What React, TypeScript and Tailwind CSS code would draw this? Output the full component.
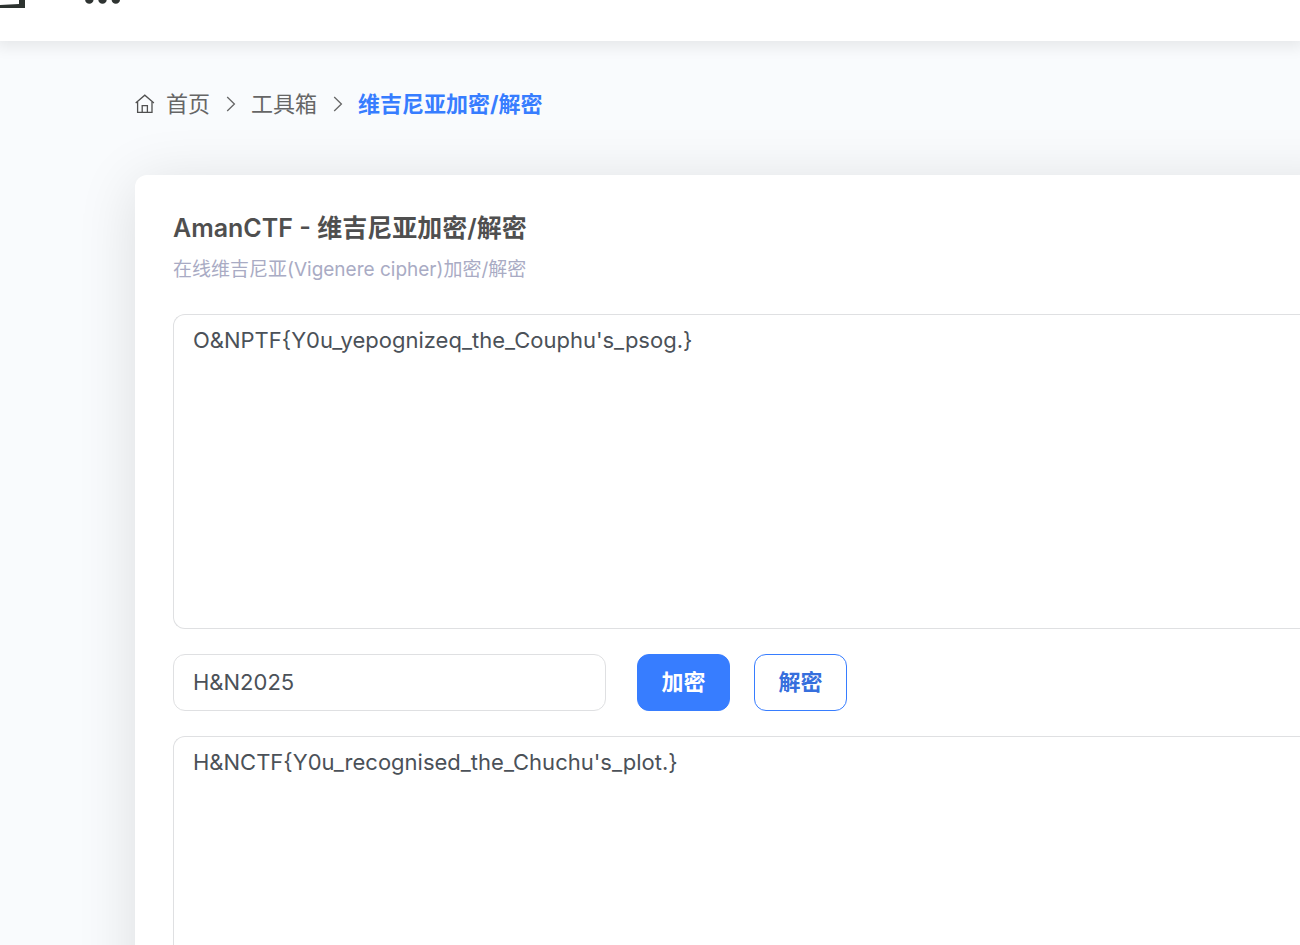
import { useState } from 'react';

function HomeIcon() {
  return (
    <svg viewBox="0 0 20 20" className="w-5 h-5" fill="none" stroke="#505050" strokeWidth="1.3" aria-hidden="true">
      <path d="M0.7 8.9 L9.8 1.2 L18.9 8.9" />
      <path d="M2.6 8 V18.4 H17 V8" />
      <path d="M7.2 18.4 V11.6 H12.4 V18.4" />
    </svg>
  );
}

function Chevron() {
  return (
    <svg viewBox="0 0 10 18" className="w-[10px] h-[18px]" fill="none" stroke="currentColor" strokeWidth="1.3" aria-hidden="true">
      <path d="M1.2 2 L8.4 9 L1.2 16" />
    </svg>
  );
}

const fieldClass =
  'block border border-[#dfe0e2] bg-white px-[19px] text-[22px] leading-8 text-[#4b5158] outline-none focus:border-[#377dff]';
const buttonClass =
  'h-[57px] w-[93px] rounded-xl border border-[#377dff] text-[22px] font-bold cursor-pointer';

function shift(text: string, key: string, dir: number) {
  const letters = key.toUpperCase().replace(/[^A-Z]/g, '');
  if (!letters) return text;
  let i = 0;
  return text.replace(/[a-z]/gi, (ch) => {
    const base = ch <= 'Z' ? 65 : 97;
    const k = letters.charCodeAt(i++ % letters.length) - 65;
    return String.fromCharCode(((ch.charCodeAt(0) - base + dir * k + 26) % 26) + base);
  });
}

export default function App() {
  const [source, setSource] = useState("O&NPTF{Y0u_yepognizeq_the_Couphu's_psog.}");
  const [key, setKey] = useState('H&N2025');
  const [result, setResult] = useState("H&NCTF{Y0u_recognised_the_Chuchu's_plot.}");

  return (
    <div className="h-screen overflow-hidden bg-[#f9fbfd] font-[Inter,'Noto_Sans_CJK_SC',sans-serif]">
      <header className="relative flex h-[41px] items-start gap-[60px] bg-white shadow-[0_2px_14px_4px_rgba(0,0,0,0.08)]">
        <button type="button" aria-label="菜单" className="cursor-pointer">
          <svg viewBox="0 0 25 9" className="block w-[25px] h-[9px]" aria-hidden="true">
            <path d="M0 5 L19 4 V0 H25 V8 H0 Z" fill="#2d3330" />
          </svg>
        </button>
        <button type="button" aria-label="更多" className="cursor-pointer">
          <svg viewBox="0 0 36 5" className="block w-9 h-[5px]" fill="#2f3432" aria-hidden="true">
            <circle cx="4.3" cy="-0.4" r="4.2" />
            <circle cx="17.5" cy="-0.4" r="4.2" />
            <circle cx="30.8" cy="-0.4" r="4.2" />
          </svg>
        </button>
      </header>

      <main className="pl-[135px]">
        <nav aria-label="面包屑" className="pt-[47px] pb-[55px]">
          <ol className="flex items-center text-[22px] leading-8 text-[#666666]">
            <li>
              <a href="#home" className="flex items-center gap-[11px]">
                <HomeIcon />
                首页
              </a>
            </li>
            <li className="pl-4 pr-[15px]"><Chevron /></li>
            <li><a href="#tools">工具箱</a></li>
            <li className="pl-4 pr-[15px]"><Chevron /></li>
            <li className="font-bold text-[#377dff]" aria-current="page">维吉尼亚加密/解密</li>
          </ol>
        </nav>

        <section className="-mr-16 rounded-tl-xl bg-white pl-[38px] pr-16 pt-[35px] pb-10 shadow-[0_8px_60px_rgba(0,0,0,0.12)]">
          <h1 className="text-[25px] leading-9 font-semibold text-[#4f4f4f]">AmanCTF - 维吉尼亚加密/解密</h1>
          <p className="mt-[6px] text-[19px] leading-9 text-[#a9abc4]">在线维吉尼亚(Vigenere cipher)加密/解密</p>

          <div className="mt-[26px] flex flex-col gap-[25px]">
            <textarea
              aria-label="待处理文本"
              spellCheck={false}
              value={source}
              onChange={(e) => setSource(e.target.value)}
              className={`${fieldClass} h-[315px] w-full resize-none rounded-l-xl border-r-0 pt-[9px]`}
            />
            <div className="flex items-center gap-6">
              <input
                type="text"
                aria-label="密钥"
                value={key}
                onChange={(e) => setKey(e.target.value)}
                className={`${fieldClass} mr-[7px] h-[57px] w-[433px] rounded-xl pb-0.5`}
              />
              <button
                type="button"
                onClick={() => setResult(shift(source, key, 1))}
                className={`${buttonClass} bg-[#377dff] text-white`}
              >
                加密
              </button>
              <button
                type="button"
                onClick={() => setResult(shift(source, key, -1))}
                className={`${buttonClass} bg-white text-[#366fdd]`}
              >
                解密
              </button>
            </div>
            <textarea
              aria-label="结果"
              spellCheck={false}
              value={result}
              onChange={(e) => setResult(e.target.value)}
              className={`${fieldClass} h-[315px] w-full resize-none rounded-l-xl border-r-0 pt-[9px]`}
            />
          </div>
        </section>
      </main>
    </div>
  );
}
